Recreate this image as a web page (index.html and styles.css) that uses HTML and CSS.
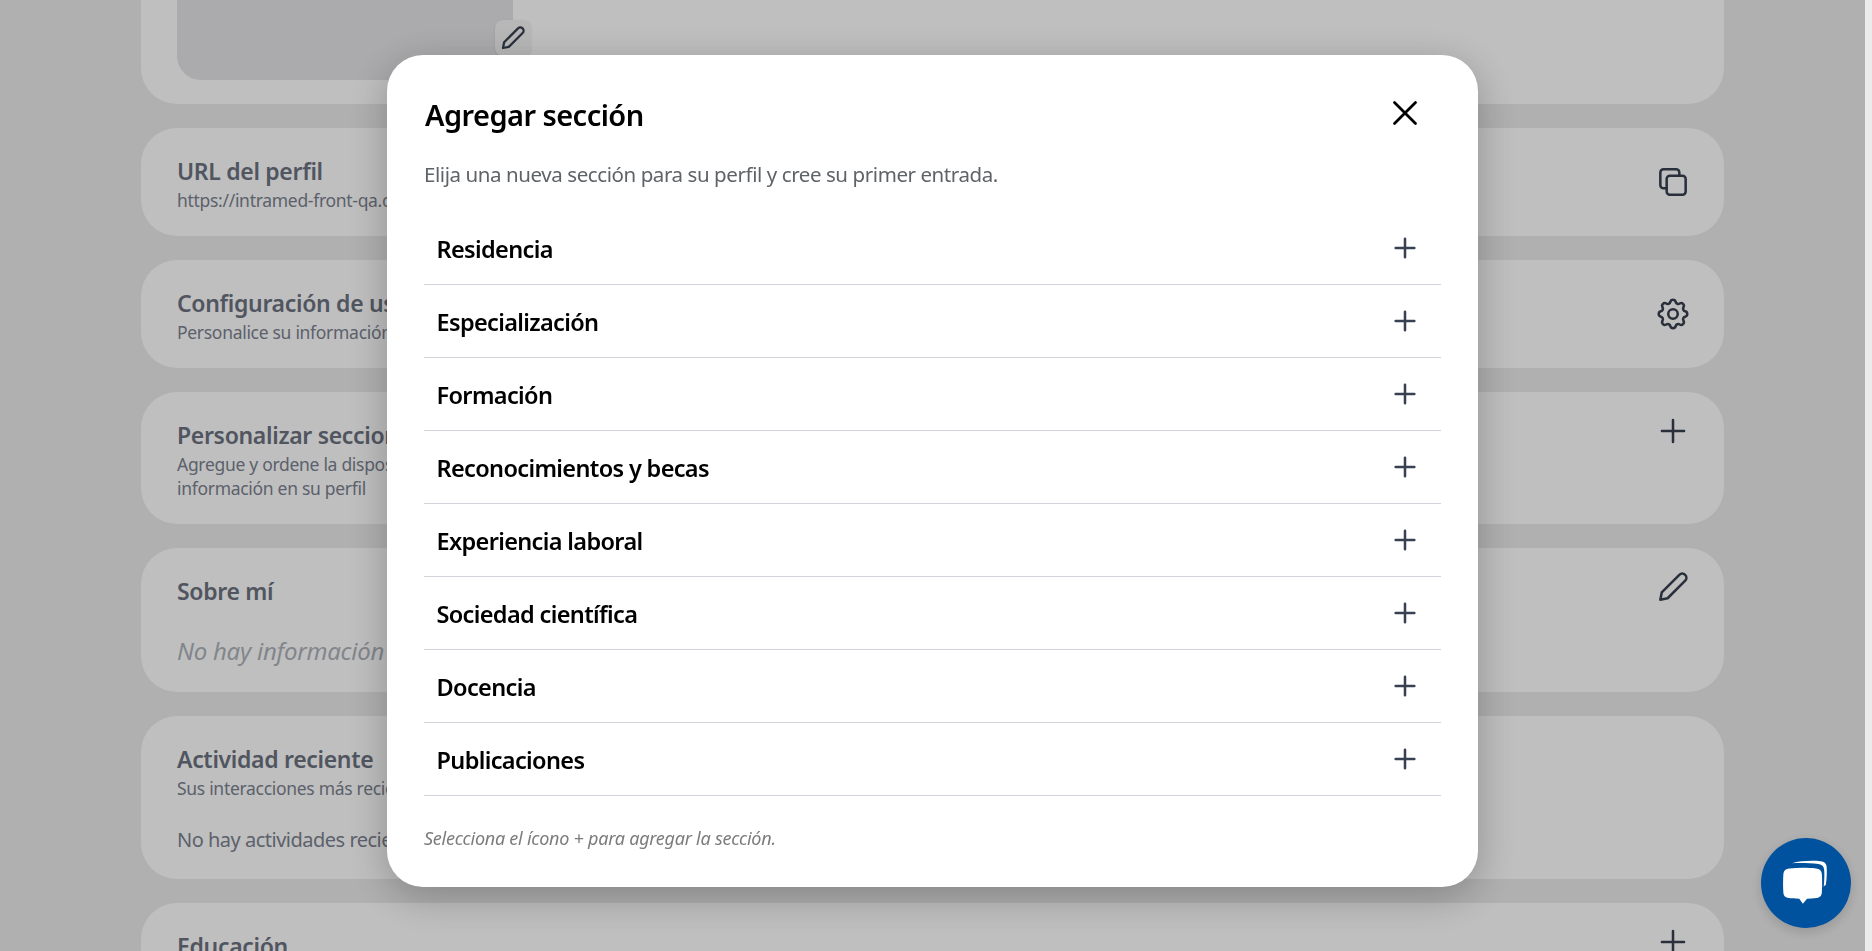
FILE: index.html
```html
<!DOCTYPE html>
<html lang="es">
<head>
<meta charset="utf-8">
<title>Perfil</title>
<link rel="stylesheet" href="styles.css">
</head>
<body>
<main class="page">
  <section class="card card-cover">
    <div class="cover">
      <button class="cover-edit"><svg class="ico ico-sm" viewBox="0 0 24 24"><path d="M4 20l.9-4.600L16 4.300a2.500 2.500 0 0 1 3.700 3.700L8.600 19.100z"/></svg></button>
    </div>
  </section>
  <section class="card card-url">
    <div class="card-text"><h2>URL del perfil</h2><p>https://intramed-front-qa.com/perfil</p></div>
    <svg class="ico" viewBox="0 0 24 24"><path d="M8 10a2 2 0 0 1 2-2h8a2 2 0 0 1 2 2v8a2 2 0 0 1-2 2h-8a2 2 0 0 1-2-2z"/><path d="M16 8V6a2 2 0 0 0-2-2H6a2 2 0 0 0-2 2v8a2 2 0 0 0 2 2h2"/></svg>
  </section>
  <section class="card card-config">
    <div class="card-text"><h2>Configuración de usuario</h2><p>Personalice su información</p></div>
    <svg class="ico" viewBox="0 0 24 24"><path d="M10.325 4.317c.426-1.756 2.924-1.756 3.350 0a1.724 1.724 0 0 0 2.573 1.066c1.543-.94 3.310.826 2.370 2.370a1.724 1.724 0 0 0 1.065 2.572c1.756.426 1.756 2.924 0 3.350a1.724 1.724 0 0 0-1.066 2.573c.94 1.543-.826 3.310-2.370 2.370a1.724 1.724 0 0 0-2.572 1.065c-.426 1.756-2.924 1.756-3.350 0a1.724 1.724 0 0 0-2.573-1.066c-1.543.94-3.310-.826-2.370-2.370a1.724 1.724 0 0 0-1.065-2.572c-1.756-.426-1.756-2.924 0-3.350a1.724 1.724 0 0 0 1.066-2.573c-.94-1.543.826-3.310 2.370-2.370 1 .608 2.296.07 2.572-1.065z"/><circle cx="12" cy="12" r="3"/></svg>
  </section>
  <section class="card card-custom">
    <div class="card-text"><h2>Personalizar secciones</h2><p>Agregue y ordene la disposición de la<br>información en su perfil</p></div>
    <svg class="ico" viewBox="0 0 24 24"><path d="M12 5v14M5 12h14"/></svg>
  </section>
  <section class="card card-about">
    <div class="card-text"><h2>Sobre mí</h2><p class="empty">No hay información</p></div>
    <svg class="ico" viewBox="0 0 24 24"><path d="M4 20l.9-4.600L16 4.300a2.500 2.500 0 0 1 3.700 3.700L8.600 19.100z"/></svg>
  </section>
  <section class="card card-activity">
    <div class="card-text"><h2>Actividad reciente</h2><p>Sus interacciones más recientes</p><p class="note">No hay actividades recientes</p></div>
  </section>
  <section class="card card-edu">
    <div class="card-text"><h2>Educación</h2></div>
    <svg class="ico" viewBox="0 0 24 24"><path d="M12 5v14M5 12h14"/></svg>
  </section>
</main>

<div class="overlay">
  <div class="modal">
    <header class="modal-head">
      <h1>Agregar sección</h1>
      <button class="close"><svg viewBox="0 0 24 24"><path d="M3 3l18 18M21 3L3 21"/></svg></button>
    </header>
    <p class="lead">Elija una nueva sección para su perfil y cree su primer entrada.</p>
    <ul class="rows">
      <li><span>Residencia</span><svg class="ico" viewBox="0 0 24 24"><path d="M12 5v14M5 12h14"/></svg></li>
      <li><span>Especialización</span><svg class="ico" viewBox="0 0 24 24"><path d="M12 5v14M5 12h14"/></svg></li>
      <li><span>Formación</span><svg class="ico" viewBox="0 0 24 24"><path d="M12 5v14M5 12h14"/></svg></li>
      <li><span>Reconocimientos y becas</span><svg class="ico" viewBox="0 0 24 24"><path d="M12 5v14M5 12h14"/></svg></li>
      <li><span>Experiencia laboral</span><svg class="ico" viewBox="0 0 24 24"><path d="M12 5v14M5 12h14"/></svg></li>
      <li><span>Sociedad científica</span><svg class="ico" viewBox="0 0 24 24"><path d="M12 5v14M5 12h14"/></svg></li>
      <li><span>Docencia</span><svg class="ico" viewBox="0 0 24 24"><path d="M12 5v14M5 12h14"/></svg></li>
      <li><span>Publicaciones</span><svg class="ico" viewBox="0 0 24 24"><path d="M12 5v14M5 12h14"/></svg></li>
    </ul>
    <p class="hint">Selecciona el ícono + para agregar la sección.</p>
  </div>
</div>

<button class="chat">
  <svg viewBox="0 0 48 48"><path fill="#fff" d="M10.600 5C18 2.600 30 2.300 38 3c3.500.4 5.500 2 5.800 5 .4 5 .2 12-.8 18-1 .5-1.500 1-2 1.500.7-5.500.8-12.500.4-16.500-.4-3-1.900-4.700-5.400-5.200-8-1-18-1.100-25.400-.8z"/><path fill="#fff" d="M8 10c8-.8 18-.8 25.500 0 3.500.4 5.500 2 5.700 5 .4 5 .4 13 0 18-.2 3.500-2.200 5-5.200 5.400-3 .3-6 .5-9 .6l-4 5-3.500-5c-4-.1-7.500-.3-10-.6-3.200-.4-5.100-1.900-5.200-4.900-.4-5.500-.4-13.500 0-18.500.2-3 2.200-4.600 5.700-5z"/></svg>
</button>
</body>
</html>
```

FILE: styles.css
```css
* { box-sizing: border-box; }
html, body { margin: 0; height: 951px; overflow: hidden; }
body { font-family: "Noto Sans", "Open Sans", sans-serif; background: #ebebeb; color: #4b5563; }

.page { padding: 0 148px 0 141px; display: flex; flex-direction: column; gap: 24px; }
.card { background: #fff; border-radius: 36px; padding: 0 32px 0 36px; display: flex; justify-content: space-between; align-items: flex-start; flex: none; position: relative; }
.card-cover { height: 104px; border-radius: 0 0 36px 36px; }
.card-url, .card-config { height: 108px; align-items: center; }
.card-custom { height: 132px; }
.card-about { height: 144px; }
.card-activity { height: 163px; }
.card-edu { height: 108px; }
.card-url .card-text, .card-config .card-text { align-self: flex-start; }
.card-text { padding-top: 27px; }

.cover { width: 336px; height: 80px; background: #e4e4e7; border-radius: 0 0 24px 24px; position: relative; }
.cover-edit { position: absolute; right: -18px; top: 20px; width: 36px; height: 36px; border: 0; border-radius: 8px; background: #f4f4f5; padding: 0; display: flex; align-items: center; justify-content: center; box-shadow: 0 1px 3px rgba(0,0,0,.1); }

h2 { margin: 0; font-size: 23px; line-height: 33px; font-weight: 600; color: #6b7280; letter-spacing: -.32px; }
.card p { margin: 0; font-size: 17.500px; line-height: 24px; color: #7b8290; letter-spacing: -.3px; }
.card p.empty { margin-top: 27px; font-size: 24px; line-height: 32px; font-style: italic; color: #aeb3bb; letter-spacing: -.25px; }
.card p.note { margin-top: 23.500px; font-size: 20px; line-height: 32px; letter-spacing: -.5px; }

.ico { width: 38px; height: 38px; fill: none; stroke: #374151; stroke-width: 1.600; stroke-linecap: round; stroke-linejoin: round; flex: none; }
.ico-sm { width: 30px; height: 30px; stroke-width: 1.800; }
.card-custom > .ico, .card-about > .ico, .card-edu > .ico { margin-top: 20px; }

.overlay { position: fixed; inset: 0 7px 0 0; background: rgba(0,0,0,.25); display: flex; justify-content: center; align-items: flex-start; padding-top: 55px; }
.modal { width: 1091px; height: 832px; background: #fff; border-radius: 36px; padding: 0 37px; box-shadow: 0 10px 40px rgba(0,0,0,.25); color: #000; }
.modal-head { height: 79px; display: flex; justify-content: space-between; align-items: flex-end; padding-right: 17px; }
h1 { margin: 0; padding-left: 1px; font-size: 29px; line-height: 38px; font-weight: 600; letter-spacing: -.55px; flex: none; }
.close { width: 38px; height: 38px; border: 0; background: none; padding: 5px; margin: 0 0 2px; }
.close svg { width: 28px; height: 28px; display: block; fill: none; stroke: #000; stroke-width: 2.400; stroke-linecap: round; }
.lead { margin: 0; padding-top: 26px; font-size: 20.500px; line-height: 28px; color: #5f6368; letter-spacing: -.42px; height: 78px; }
.rows { list-style: none; margin: 0; padding: 0; }
.rows li { height: 73px; border-bottom: 1px solid #d1d5db; padding: 0 20px 0 12.500px; display: flex; justify-content: space-between; align-items: center; }
.rows span { margin-top: 2px; font-size: 23.500px; line-height: 32px; font-weight: 600; letter-spacing: -.65px; }
.rows .ico { stroke-width: 1.900; width: 32px; height: 32px; }
.hint { margin: 0; padding-top: 30px; font-size: 18px; line-height: 24px; font-style: italic; color: #7c7c7c; letter-spacing: -.25px; }

.chat { position: fixed; left: 1761px; top: 838px; width: 90px; height: 90px; border-radius: 50%; border: 0; padding: 20px; background: #00519e; box-shadow: 0 4px 12px rgba(0,0,0,.15); }
.chat svg { width: 50px; height: 50px; display: block; }
```
